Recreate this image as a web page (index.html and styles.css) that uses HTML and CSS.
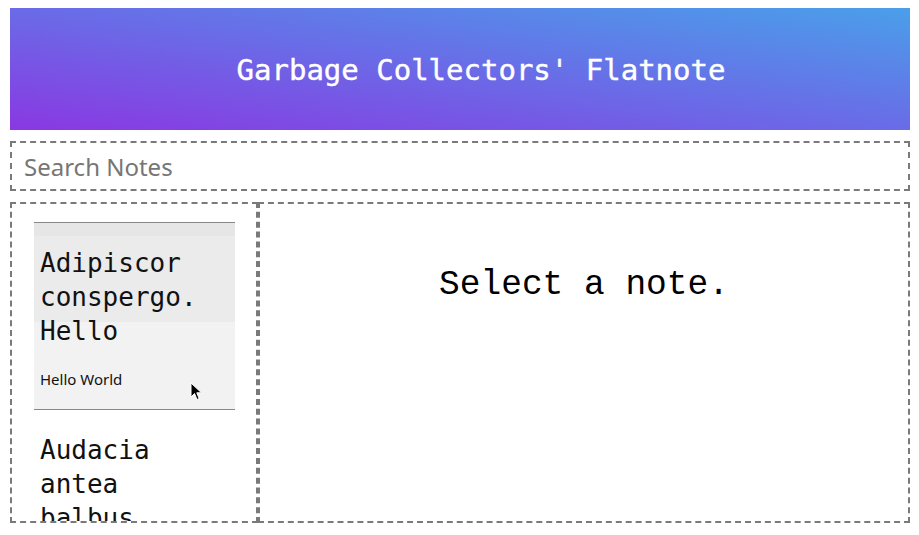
FILE: index.html
```html
<!DOCTYPE html>
<html>
<head>
<meta charset="utf-8">
<link rel="stylesheet" href="styles.css">
</head>
<body>
<div class="app">
  <header class="banner">
    <h1 class="banner-title">Garbage Collectors' Flatnote</h1>
  </header>
  <div class="search">
    <input class="search-input" type="text" placeholder="Search Notes">
  </div>
  <main class="main">
    <aside class="notes">
      <div class="note note-active">
        <div class="note-title">Adipiscor conspergo. Hello</div>
        <div class="note-preview">Hello World</div>
        <svg class="cursor" width="13" height="19" viewBox="0 0 13 19"><path d="M1 1 L1 15 L4.5 11.5 L7 17.5 L9.2 16.6 L6.8 10.8 L11.5 10.8 Z" fill="#000" stroke="#fff" stroke-width="1"/></svg>
      </div>
      <div class="note">
        <div class="note-title">Audacia antea balbus</div>
        <div class="note-preview">Hello World</div>
      </div>
    </aside>
    <section class="viewer">
      <p class="viewer-empty">Select a note.</p>
    </section>
  </main>
</div>
</body>
</html>
```
FILE: styles.css
```css
html, body {
  margin: 0;
  padding: 0;
  background: #fff;
}
.app {
  padding: 8px 9px 0 10px;
  display: flex;
  flex-direction: column;
  gap: 11px;
}
.banner {
  height: 122px;
  padding-left: 42px;
  background: linear-gradient(to top right, #8a38e2, #6a6be7 50%, #4a9fea);
  display: flex;
  align-items: center;
  justify-content: center;
}
.banner-title {
  margin: 0;
  color: #fff;
  font-family: "DejaVu Sans Mono", monospace;
  font-weight: normal;
  font-size: 29px;
  padding-top: 2px;
  -webkit-text-stroke: 0.4px #fff;
}
.search {
  height: 50px;
  box-sizing: border-box;
  border: 2px dashed #7a7a7a;
  display: flex;
}
.search-input {
  flex: 1;
  border: none;
  outline: none;
  background: transparent;
  padding: 1px 12px 0;
  font-family: "Noto Sans", sans-serif;
  font-size: 24px;
  color: #333;
}
.search-input::placeholder {
  color: #767676;
}
.main {
  display: flex;
  height: 321px;
}
.notes {
  width: 248px;
  box-sizing: border-box;
  border: 2px dashed #7a7a7a;
  padding: 18px 21px 0 22px;
  overflow: hidden;
}
.note {
  position: relative;
  border-top: 1px solid #888;
  padding: 23px 12px 19px 6px;
}
.note-active {
  background: linear-gradient(to bottom, #e6e6e6 0, #e6e6e6 13px, #ebebeb 13px, #ebebeb 99px, #f2f2f2 99px);
}
.note-title {
  font-family: "DejaVu Sans Mono", monospace;
  font-size: 26px;
  line-height: 34px;
  color: #111;
}
.note-preview {
  margin-top: 20px;
  font-family: "Noto Sans", sans-serif;
  font-size: 15px;
  line-height: 22px;
  color: #111;
}
.cursor {
  position: absolute;
  left: 156px;
  top: 159px;
}
.viewer {
  flex: 1;
  box-sizing: border-box;
  border: 2px dashed #7a7a7a;
  padding-top: 61px;
}
.viewer-empty {
  margin: 0;
  text-align: center;
  font-family: "Liberation Mono", monospace;
  font-size: 34.5px;
  line-height: 40px;
  color: #000;
}
```
